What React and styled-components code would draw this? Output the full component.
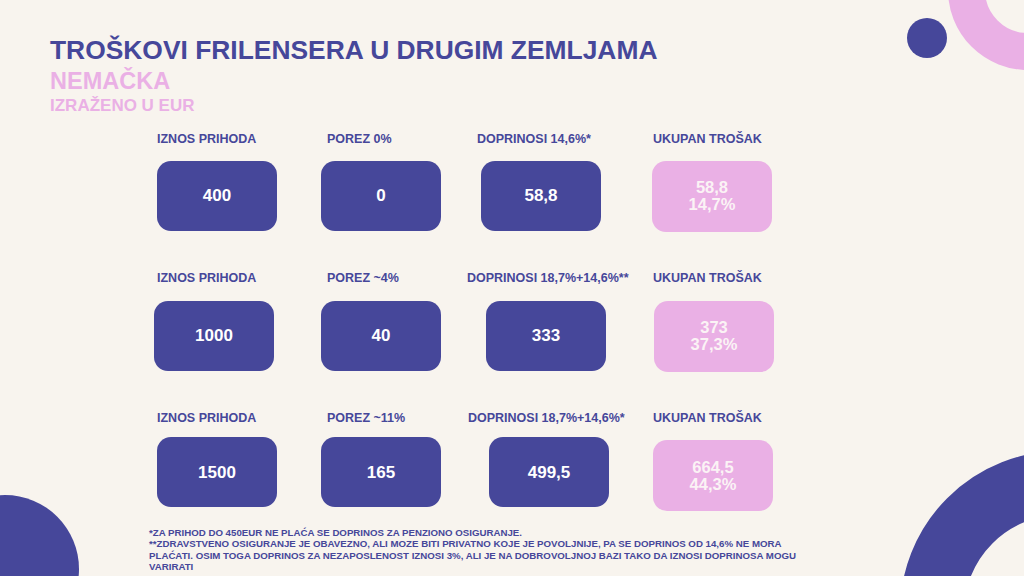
import React from 'react'
import styled, { createGlobalStyle } from 'styled-components'

const BLUE = '#46479a'
const PINK = '#eab0e5'
const CREAM = '#f8f4ee'

const GlobalStyle = createGlobalStyle`
  html, body {
    margin: 0;
    padding: 0;
    background: ${CREAM};
  }
  * {
    box-sizing: border-box;
  }
`

const Page = styled.main`
  position: relative;
  width: 1024px;
  height: 576px;
  overflow: hidden;
  background: ${CREAM};
  font-family: 'Liberation Sans', Arial, sans-serif;
  font-weight: 700;
`

const Content = styled.div`
  position: relative;
  z-index: 1;
  display: flex;
  flex-direction: column;
`

const Header = styled.header`
  padding: 37.3px 0 0 50px;
  display: flex;
  flex-direction: column;
`

const Title = styled.h1`
  margin: 0;
  font-size: 26.4px;
  line-height: 1;
  font-weight: 700;
  color: ${BLUE};
  white-space: nowrap;
`

const Country = styled.h2`
  margin: 6.2px 0 0;
  font-size: 23.5px;
  line-height: 1;
  font-weight: 700;
  color: ${PINK};
`

const Currency = styled.h3`
  margin: 3.7px 0 0;
  font-size: 17px;
  line-height: 1;
  font-weight: 700;
  color: ${PINK};
`

const Rows = styled.section`
  margin-top: 18.9px;
  display: flex;
  flex-direction: column;
  gap: 40.5px;
`

const Row = styled.div`
  display: grid;
  grid-template-columns: ${({ $cols }) =>
    `${$cols[1] - $cols[0]}px ${$cols[2] - $cols[1]}px ${$cols[3] - $cols[2]}px 120px`};
  padding-left: ${({ $cols }) => $cols[0]}px;
  align-items: start;
`

const Cell = styled.div`
  display: flex;
  flex-direction: column;
  align-items: flex-start;
`

const Label = styled.div`
  margin-left: ${({ $indent }) => $indent}px;
  font-size: 12.5px;
  line-height: 1;
  color: ${BLUE};
  white-space: nowrap;
`

const Box = styled.div`
  margin-top: ${({ $gap }) => $gap}px;
  width: 120px;
  height: ${({ $pink }) => ($pink ? 71 : 70)}px;
  border-radius: 14px;
  background: ${({ $pink }) => ($pink ? PINK : BLUE)};
  color: ${({ $pink }) => ($pink ? '#fbf3f5' : '#ffffff')};
  font-size: ${({ $pink }) => ($pink ? 16.5 : 17)}px;
  line-height: 17px;
  display: flex;
  flex-direction: column;
  align-items: center;
  justify-content: center;
  text-align: center;
`

const Footer = styled.footer`
  margin-top: 15.5px;
  padding-left: 149px;
  font-size: 9.7px;
  line-height: 11.5px;
  color: ${BLUE};
  white-space: nowrap;
`

const Ring = styled.div`
  position: absolute;
  left: ${({ $x }) => $x}px;
  top: ${({ $y }) => $y}px;
  width: ${({ $size }) => $size}px;
  height: ${({ $size }) => $size}px;
  border-radius: 50%;
  border: ${({ $thick, $color }) => `${$thick}px solid ${$color}`};
  z-index: 0;
`

const Dot = styled.div`
  position: absolute;
  left: ${({ $x }) => $x}px;
  top: ${({ $y }) => $y}px;
  width: ${({ $size }) => $size}px;
  height: ${({ $size }) => $size}px;
  border-radius: 50%;
  background: ${({ $color }) => $color};
  z-index: 0;
`

const rows = [
  {
    cols: [157, 321, 481, 652],
    labels: [157, 327, 477, 653],
    gap: 15.5,
    pinkGap: 15.5,
    cells: [
      { label: 'IZNOS PRIHODA', value: ['400'] },
      { label: 'POREZ 0%', value: ['0'] },
      { label: 'DOPRINOSI 14,6%*', value: ['58,8'] },
      { label: 'UKUPAN TROŠAK', value: ['58,8', '14,7%'], pink: true },
    ],
  },
  {
    cols: [154, 321, 486, 654],
    labels: [157, 327, 467, 653],
    gap: 16,
    pinkGap: 16,
    cells: [
      { label: 'IZNOS PRIHODA', value: ['1000'] },
      { label: 'POREZ ~4%', value: ['40'] },
      { label: 'DOPRINOSI 18,7%+14,6%**', value: ['333'] },
      { label: 'UKUPAN TROŠAK', value: ['373', '37,3%'], pink: true },
    ],
  },
  {
    cols: [157, 321, 489, 653],
    labels: [157, 327, 468, 653],
    gap: 12.5,
    pinkGap: 15.5,
    cells: [
      { label: 'IZNOS PRIHODA', value: ['1500'] },
      { label: 'POREZ ~11%', value: ['165'] },
      { label: 'DOPRINOSI 18,7%+14,6%*', value: ['499,5'] },
      { label: 'UKUPAN TROŠAK', value: ['664,5', '44,3%'], pink: true },
    ],
  },
]

export default function App() {
  return (
    <>
      <GlobalStyle />
      <Page>
        <Ring $x={948} $y={-90} $size={160} $thick={37} $color={PINK} />
        <Dot $x={907} $y={17.7} $size={40} $color={BLUE} />
        <Ring $x={900} $y={451} $size={322} $thick={64} $color={BLUE} />
        <Dot $x={-69} $y={495} $size={148} $color={BLUE} />

        <Content>
          <Header>
            <Title>TROŠKOVI FRILENSERA U DRUGIM ZEMLJAMA</Title>
            <Country>NEMAČKA</Country>
            <Currency>IZRAŽENO U EUR</Currency>
          </Header>

          <Rows>
            {rows.map((row, r) => (
              <Row key={r} $cols={row.cols}>
                {row.cells.map((cell, i) => (
                  <Cell key={i}>
                    <Label $indent={row.labels[i] - row.cols[i]}>{cell.label}</Label>
                    <Box $pink={cell.pink} $gap={cell.pink ? row.pinkGap : row.gap}>
                      {cell.value.map((line) => (
                        <span key={line}>{line}</span>
                      ))}
                    </Box>
                  </Cell>
                ))}
              </Row>
            ))}
          </Rows>

          <Footer>
            *ZA PRIHOD DO 450EUR NE PLAĆA SE DOPRINOS ZA PENZIONO OSIGURANJE.
            <br />
            **ZDRAVSTVENO OSIGURANJE JE OBAVEZNO, ALI MOZE BITI PRIVATNO KOJE JE POVOLJNIJE, PA SE DOPRINOS OD 14,6% NE MORA
            <br />
            PLAĆATI. OSIM TOGA DOPRINOS ZA NEZAPOSLENOST IZNOSI 3%, ALI JE NA DOBROVOLJNOJ BAZI TAKO DA IZNOSI DOPRINOSA MOGU
            <br />
            VARIRATI
          </Footer>
        </Content>
      </Page>
    </>
  )
}
